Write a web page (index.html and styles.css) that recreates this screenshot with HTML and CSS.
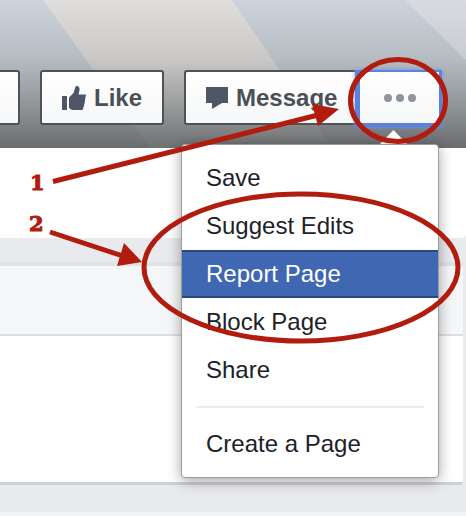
FILE: index.html
```
<!DOCTYPE html>
<html lang="en">
<head>
<meta charset="utf-8">
<title>Report Page</title>
<link rel="stylesheet" href="styles.css">
</head>
<body>
<div class="page">
  <header class="hero">
    <div class="band"></div>
    <div class="band-soft"></div>
    <div class="actions">
      <div class="btn btn-cut"></div>
      <div class="btn btn-like">
        <svg class="icon-thumb" width="24" height="24" viewBox="62 84 24 24" aria-hidden="true">
          <rect x="62" y="94" width="5" height="14"/>
          <path d="M69 95.5 L73.5 91 L75.5 84.5 C77.5 83 80 85 79.5 88 L78.5 92.5 L86 92.5 L85.2 97 L84.6 101 L83.6 105 L82.5 108 L72 108 L69 106 Z"/>
        </svg>
        <span>Like</span>
      </div>
      <div class="group">
        <div class="btn btn-message">
          <svg class="icon-bubble" width="22" height="22" viewBox="206 86 22 22" aria-hidden="true">
            <path d="M206 86 H228 V102 H222 L212 108 V102 H206 Z"/>
          </svg>
          <span>Message</span>
        </div>
        <div class="btn btn-more">
          <i class="dot"></i><i class="dot"></i><i class="dot"></i>
        </div>
      </div>
    </div>
  </header>
  <section class="top"></section>
  <section class="tabs"></section>
  <section class="body"></section>

  <div class="caret"></div>
  <nav class="menu">
    <div class="item">Save</div>
    <div class="item">Suggest Edits</div>
    <div class="item item-active">Report Page</div>
    <div class="item">Block Page</div>
    <div class="item">Share</div>
    <div class="divider"></div>
    <div class="item">Create a Page</div>
  </nav>

  <svg class="notes" width="466" height="516" viewBox="0 0 466 516" aria-hidden="true">
    <ellipse class="ring" cx="398" cy="100.5" rx="47.5" ry="41"/>
    <ellipse class="ring" cx="301" cy="267.5" rx="157" ry="73.5"/>
    <line class="shaft" x1="53" y1="181.5" x2="322" y2="114"/>
    <polygon class="head" points="339,109 312,104 318,126"/>
    <line class="shaft" x1="50" y1="232" x2="126" y2="257"/>
    <polygon class="head" points="142,262 124,243 117,266"/>
  </svg>
  <span class="num num-1">1</span>
  <span class="num num-2">2</span>
</div>
</body>
</html>
```
FILE: styles.css
```
* { box-sizing: border-box; }
html, body { margin: 0; padding: 0; }
body {
  width: 466px;
  height: 516px;
  overflow: hidden;
  background: #f2f3f5;
  font-family: "Liberation Sans", Arial, sans-serif;
}
.page {
  position: relative;
  width: 466px;
  height: 512px;
  background: #e9eaed;
}
.hero {
  position: relative;
  height: 148px;
  overflow: hidden;
  background: linear-gradient(#ccd3dc 0%, #b5bcc1 40%, #8f9497 72%, #696d70 100%);
}
.band,
.band-soft {
  position: absolute;
  left: 0;
  top: 0;
  width: 466px;
  height: 148px;
}
.band {
  background: linear-gradient(#dfdedd 0%, #c9c8c6 40%, #999a9a 72%, #6e7173 100%);
  clip-path: polygon(43px 0, 232px 0, 333px 148px, 150px 148px);
}
.band-soft {
  background: linear-gradient(#d8dce2, #aeb3b6);
  clip-path: polygon(405px 0, 466px 0, 466px 60px);
}
.actions {
  position: relative;
  display: flex;
  justify-content: flex-end;
  align-items: flex-end;
  gap: 20px;
  height: 148px;
  padding: 0 24px 23px 0;
}
.group { display: flex; align-items: flex-end; }
.btn {
  display: flex;
  align-items: center;
  height: 55px;
  flex: none;
  border: 2px solid #4f5256;
  border-radius: 3px;
  background: linear-gradient(#ffffff, #f6f7f8);
  color: #4b4f56;
  font-size: 24px;
  font-weight: 700;
}
.btn-cut { width: 60px; }
.btn-like { width: 124px; padding-left: 20px; gap: 8px; }
.btn-message { width: 171px; padding-left: 20px; gap: 8px; border-right: 0; border-radius: 3px 0 0 3px; }
.icon-thumb, .icon-bubble { fill: #4d5567; flex: none; }
.btn-more {
  width: 87px;
  height: 57px;
  margin-bottom: -2px;
  justify-content: center;
  gap: 4px;
  border: solid #5b82dc;
  border-width: 2px 3px 4px 5px;
  border-radius: 1px;
  box-shadow: 0 0 4px #6f94ea;
}
.dot {
  width: 8px;
  height: 8px;
  border-radius: 50%;
  background: #90949c;
}
.top {
  height: 90px;
  background: #ffffff;
  border-bottom-right-radius: 4px;
}
.tabs {
  width: 463px;
  height: 74px;
  margin-top: 24px;
  background: #f5f6f7;
  border-top: 4px solid #e1e2e5;
  border-bottom: 2px solid #dddfe2;
}
.body {
  width: 463px;
  height: 149px;
  background: #ffffff;
  border-bottom: 3px solid #d0d1d5;
  border-bottom-right-radius: 3px;
}
.caret {
  position: absolute;
  left: 380px;
  top: 130px;
  width: 27px;
  height: 14px;
  background: #ffffff;
  clip-path: polygon(50% 0, 100% 100%, 0 100%);
}
.menu {
  position: absolute;
  left: 181px;
  top: 144px;
  width: 258px;
  height: 334px;
  padding-top: 9px;
  background: #ffffff;
  border: 1px solid #9b9da0;
  border-radius: 4px;
  box-shadow: 0 3px 14px rgba(0, 0, 0, 0.36);
  color: #1d2129;
  font-size: 24px;
}
.item {
  height: 48px;
  padding-left: 24px;
  line-height: 47px;
  white-space: nowrap;
}
.item-active {
  background: #4067b1;
  border-top: 2px solid #29487d;
  border-bottom: 2px solid #29487d;
  color: #ffffff;
  line-height: 43px;
}
.divider {
  height: 2px;
  margin: 12px 14px;
  background: #ebecf0;
}
.notes { position: absolute; left: 0; top: 0; }
.ring { fill: none; stroke: #b11c0e; stroke-width: 5; }
.shaft { stroke: #b11c0e; stroke-width: 5; }
.head { fill: #b11c0e; }
.num {
  position: absolute;
  color: #b11c0e;
  font-family: "DejaVu Serif", serif;
  font-size: 21px;
  font-weight: 700;
  line-height: 24px;
  -webkit-text-stroke: 1px #b11c0e;
}
.num-1 { left: 30px; top: 171px; }
.num-2 { left: 29px; top: 212px; }
```
